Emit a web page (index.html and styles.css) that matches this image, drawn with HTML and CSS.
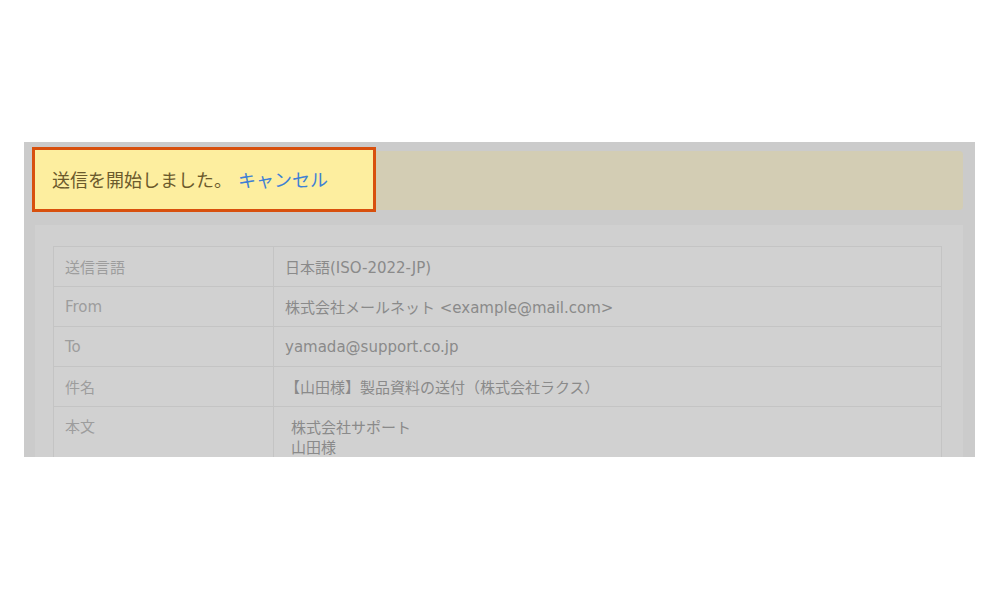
FILE: index.html
```html
<!DOCTYPE html>
<html lang="ja">
<head>
<meta charset="utf-8">
<link rel="stylesheet" href="styles.css">
</head>
<body>
<div class="stage">
  <div class="frame">
    <div class="alert">
      <div class="hl">
        <span class="msg">送信を開始しました。</span>
        <a class="cancel" href="#">キャンセル</a>
      </div>
    </div>
    <div class="panel">
      <table class="info">
        <tr><td class="lbl">送信言語</td><td class="val">日本語(ISO-2022-JP)</td></tr>
        <tr><td class="lbl">From</td><td class="val">株式会社メールネット &lt;example@mail.com&gt;</td></tr>
        <tr><td class="lbl">To</td><td class="val">yamada@support.co.jp</td></tr>
        <tr><td class="lbl">件名</td><td class="val">【山田様】製品資料の送付（株式会社ラクス）</td></tr>
        <tr class="body-row"><td class="lbl">本文</td><td class="val"><div class="bodytext">株式会社サポート<br>山田様</div></td></tr>
      </table>
    </div>
  </div>
</div>
</body>
</html>
```

FILE: styles.css
```css
html, body {
  margin: 0;
  padding: 0;
  background: #ffffff;
}
.stage {
  padding: 142px 0 0 24px;
}
.frame {
  box-sizing: border-box;
  width: 951px;
  height: 315px;
  overflow: hidden;
  background: #cbcbcb;
  padding: 9px 12px 0 11px;
  font-family: "DejaVu Sans", "Noto Sans CJK JP", sans-serif;
}
.alert {
  height: 59px;
  background: #d3cdb4;
  border-radius: 4px;
  display: flex;
}
.hl {
  box-sizing: border-box;
  width: 344px;
  margin: -4px 0 -2px -3px;
  border: 3px solid #d8500d;
  background: #fdee9f;
  display: flex;
  align-items: center;
  padding-left: 17px;
  padding-bottom: 2px;
  font-family: "Noto Sans CJK JP", sans-serif;
  font-size: 18px;
}
.msg {
  color: #6b5a2c;
  margin-right: 6px;
}
.cancel {
  color: #3f80d4;
  text-decoration: none;
}
.panel {
  margin-top: 15px;
  background: #d0d0d0;
  padding: 21px 21px 0 18px;
  height: 260px;
}
.info {
  width: 100%;
  border-collapse: collapse;
  border: 1px solid #c4c4c4;
  font-size: 15px;
}
.info td {
  border: 1px solid #c4c4c4;
  height: 39px;
  padding: 0 0 0 11px;
  vertical-align: middle;
  background: #d1d1d1;
}
.lbl {
  width: 208px;
  color: #9d9d9d;
}
.val {
  color: #8a8a8a;
}
.body-row td {
  vertical-align: top;
  padding-top: 8px;
}
.bodytext {
  padding: 3px 0 0 6px;
  line-height: 20px;
}
```
